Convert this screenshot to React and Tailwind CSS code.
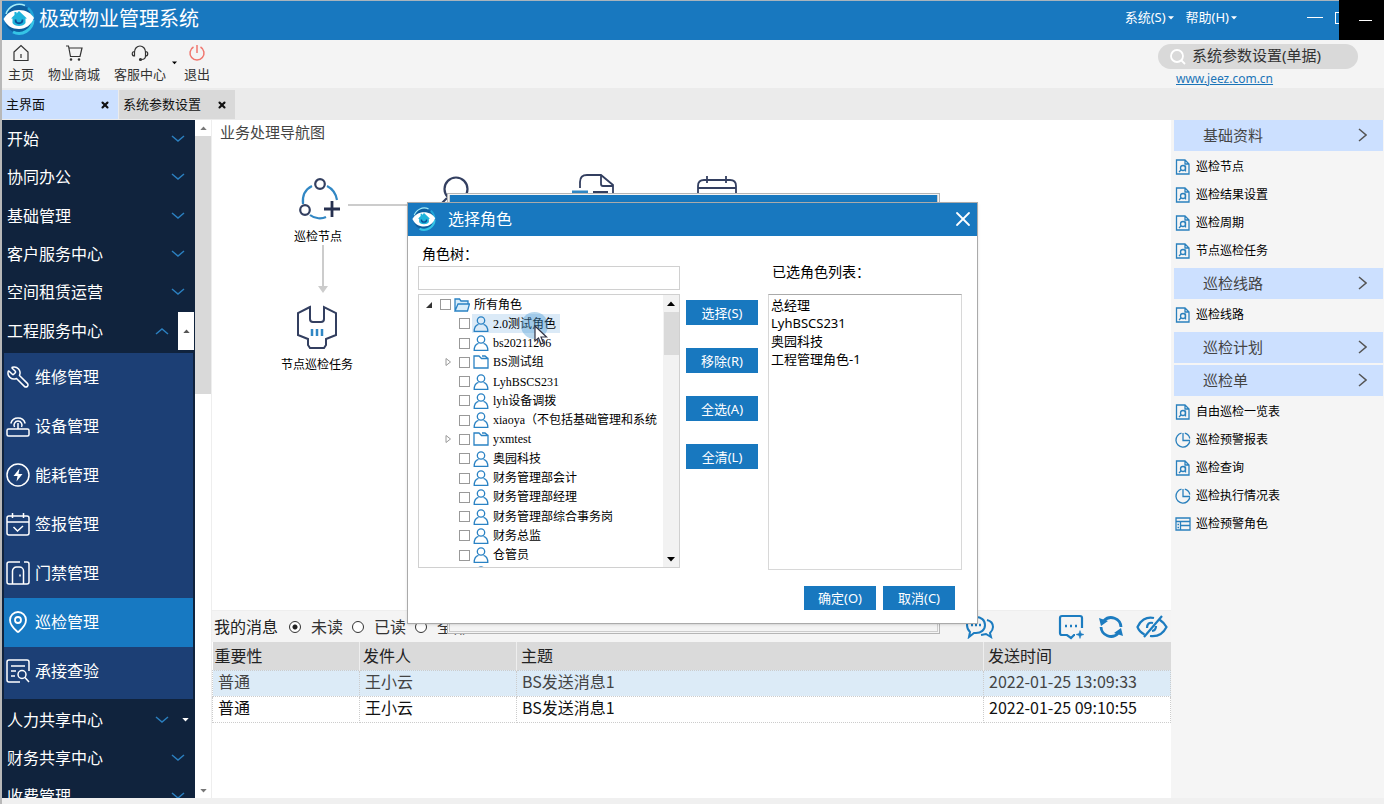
import { Wrench, MapPin, X } from 'lucide-react'
import clsx from 'clsx'

const topMenus = ['开始', '协同办公', '基础管理', '客户服务中心', '空间租赁运营', '工程服务中心']
const bottomMenus = ['人力共享中心', '财务共享中心', '收费管理']

const subMenus = [
  { name: '维修管理', icon: 'wrench' },
  { name: '设备管理', icon: 'router' },
  { name: '能耗管理', icon: 'energy' },
  { name: '签报管理', icon: 'calendar' },
  { name: '门禁管理', icon: 'door' },
  { name: '巡检管理', icon: 'pin', active: true },
  { name: '承接查验', icon: 'inspect' },
]

const sideGroups = [
  {
    title: '基础资料',
    items: [
      { name: '巡检节点', icon: 'doc' },
      { name: '巡检结果设置', icon: 'doc' },
      { name: '巡检周期', icon: 'doc' },
      { name: '节点巡检任务', icon: 'doc' },
    ],
  },
  { title: '巡检线路', items: [{ name: '巡检线路', icon: 'doc' }] },
  { title: '巡检计划', items: [] },
  {
    title: '巡检单',
    items: [
      { name: '自由巡检一览表', icon: 'doc' },
      { name: '巡检预警报表', icon: 'pie' },
      { name: '巡检查询', icon: 'doc' },
      { name: '巡检执行情况表', icon: 'pie' },
      { name: '巡检预警角色', icon: 'table' },
    ],
  },
]

const roles = [
  { name: '所有角色', type: 'root' },
  { name: '2.0测试角色', type: 'user', hover: true },
  { name: 'bs20211206', type: 'user' },
  { name: 'BS测试组', type: 'folder' },
  { name: 'LyhBSCS231', type: 'user' },
  { name: 'lyh设备调拨', type: 'user' },
  { name: 'xiaoya（不包括基础管理和系统', type: 'user' },
  { name: 'yxmtest', type: 'folder' },
  { name: '奥园科技', type: 'user' },
  { name: '财务管理部会计', type: 'user' },
  { name: '财务管理部经理', type: 'user' },
  { name: '财务管理部综合事务岗', type: 'user' },
  { name: '财务总监', type: 'user' },
  { name: '仓管员', type: 'user' },
]

const selectedRoles = ['总经理', 'LyhBSCS231', '奥园科技', '工程管理角色-1']

const messages = [
  { level: '普通', sender: '王小云', subject: 'BS发送消息1', time: '2022-01-25 13:09:33' },
  { level: '普通', sender: '王小云', subject: 'BS发送消息1', time: '2022-01-25 09:10:55' },
]

function Logo({ className }) {
  return (
    <svg className={className} viewBox="0 0 32 32" fill="none">
      <circle cx="16" cy="16" r="14" fill="#0d5f9f" />
      <path d="M3 11A14 14 0 0 1 22 2.500" stroke="#a5ecf8" strokeWidth="1.500" />
      <path d="M30 17A14 14 0 0 1 10 29" stroke="#35c4e6" strokeWidth="3" />
      <path d="M25 5a14 14 0 0 1 5 10" stroke="#1fa5d8" strokeWidth="2.500" />
      <path d="M0.500 16C4 10 9 7 16 7s12 3 15 8c-3 7-8 11-15 11S4 23 0.500 16Z" fill="#fff" />
      <path d="M16 8L24 15.500h-1.500V20c-2 4-11 4-13 0v-4.500H8l3.500-3.500V9h2v1.500Z" fill="#1fb4dc" />
      <path d="M12.500 16.500c0 5 7 5 7 0" stroke="#0b4f96" strokeWidth="1.800" />
    </svg>
  )
}

// 小三角箭头
function Caret({ up, className }) {
  return (
    <svg className={className} width="8" height="5" viewBox="0 0 8 5" fill="currentColor">
      <path d={up ? 'M0 5L4 0.500L8 5Z' : 'M0 0L4 4.500L8 0Z'} />
    </svg>
  )
}

function Chevron({ up }) {
  return (
    <svg width="14" height="8" viewBox="0 0 14 8" fill="none" stroke="#2b7fbf" strokeWidth="1.500">
      <path d={up ? 'M1 7L7 2L13 7' : 'M1 1L7 6L13 1'} />
    </svg>
  )
}

function SubIcon({ name }) {
  if (name === 'wrench') return <Wrench className="w-6 h-6 -scale-x-100" strokeWidth={1.5} />
  if (name === 'pin') return <MapPin className="w-6 h-6" strokeWidth={1.8} />
  return (
    <svg className="w-6 h-6" viewBox="0 0 24 24" fill="none" stroke="currentColor" strokeWidth="1.500">
      {name === 'router' && (
        <>
          <rect x="1" y="15" width="22" height="7" rx="1.500" />
          <path d="M12 15V9M8.500 13a4 4 0 1 1 7 0M4.800 9.500a7.500 7.500 0 0 1 14.400 0" />
        </>
      )}
      {name === 'energy' && (
        <>
          <circle cx="12" cy="12" r="11" />
          <path d="M13.500 5.500L7.500 13h4l-1 5.500 6-7.500h-4Z" fill="currentColor" stroke="none" />
        </>
      )}
      {name === 'calendar' && (
        <path d="M3 4h18a2 2 0 0 1 2 2v15a2 2 0 0 1-2 2H3a2 2 0 0 1-2-2V6a2 2 0 0 1 2-2ZM1 10h22M6.500 1v5M17.500 1v5M7.500 15l4 4 5.500-5" />
      )}
      {name === 'door' && (
        <>
          <path d="M14 1H3a2 2 0 0 0-2 2v18a2 2 0 0 0 2 2h18a2 2 0 0 0 2-2V3a2 2 0 0 0-2-2h-3" />
          <path d="M6.500 23V10a4 4 0 0 1 4-4h3a4 4 0 0 1 4 4v13M14 13.500v2" />
        </>
      )}
      {name === 'inspect' && (
        <>
          <path d="M23 12V3a2 2 0 0 0-2-2H3a2 2 0 0 0-2 2v18a2 2 0 0 0 2 2h11M5 7h14M5 12h5M5 17h4" />
          <circle cx="16" cy="15.500" r="4" />
          <path d="M19 18.500L23 23" />
        </>
      )}
    </svg>
  )
}

function ItemIcon({ name }) {
  return (
    <svg className="w-4 h-4 shrink-0" viewBox="0 0 16 16" fill="none" stroke="#2a80bd" strokeWidth="1.300">
      {name === 'doc' && (
        <>
          <path d="M10 1H1.500v14h12.500V5Zv4h4" />
          <circle cx="8" cy="9" r="2.500" />
          <path d="M10.500 6.500v6M6.200 10.800L4 13" />
        </>
      )}
      {name === 'pie' && <path d="M6.500 1.200a7 7 0 1 0 8.300 8.300M8 1v7.500h7M9.800 1.200a7 7 0 0 1 5 5.300" />}
      {name === 'table' && <path d="M1 2h14v12H1ZM1 5.500h14M5.500 5.500v8.500M5.500 9.500h9.500M2.500 8.500h1.500M2.500 11.500h1.500" />}
    </svg>
  )
}

function TreeIcon({ type }) {
  return (
    <svg className="w-4 h-4 shrink-0" viewBox="0 0 16 16" fill="none" stroke="#2a82c4" strokeWidth="1.300">
      {type === 'user' && (
        <>
          <circle cx="8" cy="4.500" r="3.700" />
          <path d="M5.500 8.300C3 9 1.200 11.500 1.200 15.300h13.600c0-3.800-1.800-6.300-4.300-7" />
        </>
      )}
      {type === 'folder' && <path d="M1 14V2h5l2.500 2.500H15V14ZM9 2h3l3 2.500" />}
      {type === 'root' && <path d="M1 14V2h4.500L7 4h7v3M1 14L4 7h11.500L13.500 14Z" fill="#d8edfa" />}
    </svg>
  )
}

function TitleBar() {
  return (
    <header className="flex h-10 shrink-0 border-t border-[#a9b4bc] bg-[#1878bf] text-white">
      <div className="flex flex-1 items-center pl-px pb-1">
        <Logo className="w-8 h-8" />
        <h1 className="ml-1 text-xl leading-8">极致物业管理系统</h1>
      </div>
      <nav className="flex items-center gap-3 pb-[5px] text-[13px]">
        <button className="flex items-center gap-[2px]">系统(S)<Caret className="w-[6px] h-[4px]" /></button>
        <button className="flex items-center gap-[2px]">帮助(H)<Caret className="w-[6px] h-[4px]" /></button>
      </nav>
      <div className="ml-[70px] flex items-center gap-3 pb-[6px]">
        <button aria-label="最小化" className="h-px w-4 bg-white"></button>
        <button aria-label="最大化" className="h-3 w-1 border border-r-0 border-white"></button>
      </div>
      <div className="-mt-px flex w-[45px] items-center justify-center bg-black pl-2">
        <span className="h-px w-[13px] bg-white"></span>
      </div>
    </header>
  )
}

function ToolButton({ label, children }) {
  return (
    <button className="flex flex-col items-center gap-[2px] text-[13px] leading-5 text-[#333]">
      <svg className="h-[18px] w-[18px]" viewBox="0 0 18 18" fill="none" stroke="currentColor" strokeWidth="1.200">
        {children}
      </svg>
      {label}
    </button>
  )
}

function Toolbar() {
  return (
    <div className="flex h-12 shrink-0 bg-[#f4f4f4]">
      <div className="flex flex-1 items-start pl-[6px] pt-1">
        <ToolButton label="主页">
          <path d="M2 8L9 1.500L16 8v8.500H2ZM9 10v4" />
        </ToolButton>
        <div className="ml-[14px] flex">
          <ToolButton label="物业商城">
            <path d="M1 2h2.500l2 10.500h9.500l2-8.500H4" />
            <circle cx="6" cy="15.500" r="0.700" />
            <circle cx="14" cy="15.500" r="0.700" />
          </ToolButton>
        </div>
        <div className="ml-[14px] flex">
          <ToolButton label="客服中心">
            <path d="M3.500 11V8a5.500 6 0 0 1 11 0v3M3.500 7.500c-3 0-3 4.500 0 4.500ZM14.500 7.500c3 0 3 4.500 0 4.500ZM14.500 12c0 2-1.500 3.500-4 3.500" />
            <circle cx="9.500" cy="15.500" r="1" fill="currentColor" />
          </ToolButton>
        </div>
        <Caret className="ml-[6px] mt-[17px] w-[5px] h-[4px]" />
        <div className="ml-[7px] flex">
          <ToolButton label="退出">
            <path d="M9 1v8M5.500 3a7 7 0 1 0 7 0" stroke="#f0766e" strokeWidth="1.500" />
          </ToolButton>
        </div>
      </div>
      <div className="mr-[26px] w-[200px] pt-1">
        <label className="flex h-[25px] items-center rounded-full bg-[#d9d9d9] pl-3">
          <svg className="w-4 h-4 shrink-0" viewBox="0 0 16 16" fill="none" stroke="#fff" strokeWidth="1.800">
            <circle cx="7" cy="7" r="6" />
            <path d="M11.500 11.500L15 15" />
          </svg>
          <input
            type="text"
            aria-label="搜索"
            defaultValue="系统参数设置(单据)"
            className="ml-[6px] w-[150px] bg-transparent pb-[2px] text-[15px] text-[#333] outline-none"
          />
        </label>
        <a href="#" className="ml-[18px] block w-fit text-xs leading-5 text-[#1b74b8] underline">www.jeez.com.cn</a>
      </div>
    </div>
  )
}

function Tabs() {
  return (
    <div className="flex h-8 shrink-0 gap-px bg-[#ebebeb] pt-[2px] pb-px text-[13px] text-[#111]">
      <div className="flex w-[116px] items-center justify-between bg-[#cce0ff] pl-1 pr-2">
        主界面
        <button aria-label="关闭主界面"><X className="w-[10px] h-[10px]" strokeWidth={5} /></button>
      </div>
      <div className="flex w-[116px] items-center justify-between bg-[#d9d9d9] pl-1 pr-2">
        系统参数设置
        <button aria-label="关闭系统参数设置"><X className="w-[10px] h-[10px]" strokeWidth={5} /></button>
      </div>
    </div>
  )
}

function Sidebar() {
  return (
    <aside className="flex w-[210px] shrink-0">
      <div className="w-[193px] overflow-hidden bg-[#10233d] text-base text-white">
        <div className="grid h-[230px] grid-rows-6">
          {topMenus.map((name) => (
            <button key={name} className="flex items-center justify-between pl-[5px] text-left">
              {name}
              {name === '工程服务中心' ? (
                <span className="flex items-center gap-[9px] pr-px">
                  <Chevron up />
                  <span className="flex h-[38px] w-4 items-center justify-center bg-white text-[#555]">
                    <Caret up className="w-[7px] h-[4px]" />
                  </span>
                </span>
              ) : (
                <span className="pr-[10px]"><Chevron /></span>
              )}
            </button>
          ))}
        </div>
        <div className="mx-[2px] mt-[3px] bg-[#1c3f75] pb-[3px]">
          {subMenus.map((item) => (
            <button
              key={item.name}
              className={clsx(
                'flex h-[49px] w-full items-center gap-[5px] pl-[2px] pb-[2px] text-left',
                item.active && 'bg-[#1779c2]'
              )}
            >
              <SubIcon name={item.icon} />
              {item.name}
            </button>
          ))}
        </div>
        <div className="pt-[2px]">
          {bottomMenus.map((name, i) => (
            <button key={name} className="flex h-[38px] w-full items-center justify-between pl-[5px] pr-[10px] text-left">
              {name}
              {i === 0 ? (
                <span className="-mr-[4px] flex items-center gap-[13px]">
                  <Chevron />
                  <Caret className="w-[7px] h-[4px]" />
                </span>
              ) : (
                <Chevron />
              )}
            </button>
          ))}
        </div>
      </div>
      {/* 滚动条 */}
      <div className="flex w-[17px] flex-col items-center border-r border-[#eee] bg-white text-[#777]">
        <div className="flex h-4 items-center"><Caret up className="w-[7px] h-[4px]" /></div>
        <div className="h-[258px] w-full bg-[#d9d9d9]"></div>
        <div className="mt-auto flex h-[15px] items-center"><Caret className="w-[7px] h-[4px]" /></div>
      </div>
    </aside>
  )
}

function FlowMap() {
  return (
    <section className="relative flex-1 bg-white">
      <h2 className="pl-2 text-[15px] leading-6 text-[#444]">业务处理导航图</h2>
      {/* 流程节点 */}
      <button className="absolute left-[82px] top-[57px] flex flex-col items-center gap-2 text-xs text-black">
        <svg className="w-11 h-11" viewBox="0 0 44 44" fill="none" strokeWidth="2.200">
          <path d="M7 27C6 18 10 12 16 9M31 9c6 3 9 8 10 14M14 38c5 4 12 4 16 2" stroke="#3187c4" />
          <circle cx="24" cy="7" r="4.800" stroke="#333f60" />
          <circle cx="9" cy="33" r="4.800" stroke="#333f60" />
          <path d="M36 24v16M28 32h16" stroke="#26304f" strokeWidth="2.800" />
        </svg>
        巡检节点
      </button>
      <button className="absolute left-[69px] top-[185px] flex flex-col items-center gap-2 text-xs text-black">
        <svg className="w-11 h-11" viewBox="0 0 44 44" fill="none" strokeWidth="2">
          <path d="M15 2L3 8v22l10 4v6l2 3h14l2-3v-6l10-4V8L29 2v12q0 3-3 3h-8q-3 0-3-3Z" stroke="#333f60" />
          <path d="M17 24v7M22 24v7M27 24v7" stroke="#3187c4" strokeWidth="2.500" />
        </svg>
        节点巡检任务
      </button>
      <div className="absolute left-[136px] top-[84px] h-[2px] w-[90px] bg-[#ccc]"></div>
      <svg className="absolute left-[106px] top-[125px]" width="10" height="50" viewBox="0 0 10 50" fill="#ccc">
        <path d="M4 0h2v41h4L5 48L0 41h4Z" />
      </svg>
      <svg className="absolute left-[222px] top-[54px]" width="44" height="44" viewBox="0 0 44 44" fill="none" stroke="#333f60" strokeWidth="2.200">
        <circle cx="22" cy="15" r="11.500" />
        <path d="M13 24L6 31" />
      </svg>
      <svg className="absolute left-[358px] top-[54px]" width="44" height="40" viewBox="0 0 44 40" fill="none" stroke="#333f60" strokeWidth="1.800">
        <path d="M10 14V8q0-7 7-7h14l12 10v28M31 1v9q0 2 2 2h10M23 18h15" />
        <path d="M2 18h16" stroke="#3187c4" strokeWidth="3" />
      </svg>
      <svg className="absolute left-[482px] top-[54px]" width="44" height="40" viewBox="0 0 44 40" fill="none" stroke="#333f60" strokeWidth="1.800">
        <path d="M4 40V12q0-6 6-6h26q6 0 6 6v28M4 14h38M13 2v7M32 2v7" />
      </svg>
    </section>
  )
}

function Messages() {
  return (
    <section className="h-[188px] shrink-0 bg-white text-base text-[#222]">
      <div className="flex h-8 items-center border-t border-[#eee] bg-[#f4f4f4] pl-[2px]">
        <span className="mr-[11px]">我的消息</span>
        {['未读', '已读', '全部'].map((label, i) => (
          <label key={label} className="mr-[9px] flex items-center gap-[10px] text-[#333]">
            <input
              type="radio"
              name="read"
              defaultChecked={i === 0}
              className="h-3 w-3 appearance-none rounded-full border border-[#333] bg-white checked:border-[#333] checked:bg-[radial-gradient(#222_0_2px,white_3px)]"
            />
            {label}
          </label>
        ))}
        <div className="ml-auto flex items-center pr-[3px] text-[#1c7cc0]">
          <button aria-label="聊天" className="mr-[63px]">
            <svg width="30" height="24" viewBox="0 0 30 24" fill="none" stroke="currentColor" strokeWidth="2">
              <path d="M11 2c5 0 9 3 9 8s-4 8-9 8H9l-5 4 1-5c-2-2-3-4-3-7 0-5 4-8 9-8ZM22 5c4 1 6 4 6 7s-1 4-3 6l1 4-5-3-5 1" />
              <path d="M6 10h2M10 10h2M14 10h2" strokeWidth="2.500" />
            </svg>
          </button>
          <button aria-label="新消息" className="mr-[14px]">
            <svg width="26" height="26" viewBox="0 0 26 26" fill="none" stroke="currentColor" strokeWidth="2.200">
              <path d="M24 14V4q0-2-2-2H4Q2 2 2 4v15q0 2 2 2h5l4 3 3-3h1" />
              <path d="M22 16.500l1 3 3 1-3 1-1 3-1-3-3-1 3-1Z" fill="currentColor" strokeWidth="0.500" />
              <path d="M7 12h2M12 12h2M17 12h2" strokeWidth="2.500" />
            </svg>
          </button>
          <button aria-label="刷新" className="mr-3">
            <svg width="26" height="26" viewBox="0 0 26 26" fill="none" stroke="currentColor" strokeWidth="2.800">
              <path d="M6 6.500a10 10 0 0 1 17 6.500M20 19.500A10 10 0 0 1 3 13" />
              <path d="M1 4l2 8 7-5ZM25 22l-2-8-7 5Z" fill="currentColor" stroke="none" />
            </svg>
          </button>
          <button aria-label="隐藏">
            <svg width="32" height="24" viewBox="0 0 32 24" fill="none" stroke="currentColor" strokeWidth="2.200">
              <path d="M18 3C10 1 4 6 1.500 12c1.500 4 4 6 7 7.500M24 5c3 2 5 4 6.500 7C27 19 21 22 14 21M17 8c-4-1-6 1-6 5M20 11c0 3-1 4.500-4 5M26 1L8 22" />
            </svg>
          </button>
        </div>
      </div>
      <table className="w-full table-fixed border-collapse text-left font-['Noto_Sans_CJK_SC',sans-serif]">
        <thead>
          <tr className="h-7 bg-[#dadada] leading-6">
            <th className="w-[147px] border-r border-[#eee] p-0 pb-[2px] pl-[2px] font-normal">重要性</th>
            <th className="w-[157px] border-r border-[#eee] p-0 pb-[2px] pl-[3px] font-normal">发件人</th>
            <th className="border-r border-[#eee] p-0 pb-[2px] pl-1 font-normal">主题</th>
            <th className="w-[187px] p-0 pb-[2px] pl-1 font-normal">发送时间</th>
          </tr>
        </thead>
        <tbody>
          {messages.map((m, i) => (
            <tr key={m.time} className={clsx('h-[26px] leading-5', i === 0 ? 'bg-[#dcebf7] text-[#444]' : 'text-[#111]')}>
              <td className="border border-dotted border-[#ccc] p-0 pb-1 pl-[5px]">{m.level}</td>
              <td className="border border-dotted border-[#ccc] p-0 pb-1 pl-[5px]">{m.sender}</td>
              <td className="border border-dotted border-[#ccc] p-0 pb-1 pl-[5px]">{m.subject}</td>
              <td className="border border-dotted border-[#ccc] p-0 pb-1 pl-[5px]">{m.time}</td>
            </tr>
          ))}
        </tbody>
      </table>
    </section>
  )
}

function RightPanel() {
  return (
    <aside className="w-[213px] shrink-0 bg-[#f5f5f5] pl-[3px] pr-px">
      {sideGroups.map((group) => (
        <div key={group.title}>
          <button className="flex h-[31px] w-full items-center justify-between bg-[#cce0ff] pb-[2px] pl-[29px] pr-4 text-[15px] leading-6 text-[#444]">
            {group.title}
            <svg width="9" height="14" viewBox="0 0 9 14" fill="none" stroke="#555" strokeWidth="1.500">
              <path d="M1 1L8 7L1 13" />
            </svg>
          </button>
          {group.items.length > 0 ? (
            <div className="pt-[2px] pb-[3px]">
              {group.items.map((item) => (
                <a key={item.name} href="#" className="flex h-7 items-center gap-[5px] pl-px text-xs text-black">
                  <ItemIcon name={item.icon} />
                  {item.name}
                </a>
              ))}
            </div>
          ) : (
            <div className="h-[2px]"></div>
          )}
        </div>
      ))}
    </aside>
  )
}

function RoleTree() {
  return (
    <div className="flex h-[274px] border border-[#d0d0d0]">
      <div className="flex-1 overflow-hidden">
        <div className="grid h-[289px] grid-rows-15 text-xs text-black font-['Liberation_Serif','Noto_Sans_CJK_SC',serif]">
          {roles.map((role) => (
            <div key={role.name} className={clsx('flex items-center', role.type === 'root' ? 'pl-[6px]' : 'pl-[25px]')}>
              <svg className="mr-[7px] h-2 w-2" viewBox="0 0 8 8" fill="none">
                {role.type === 'root' && <path d="M7 1v6H1Z" fill="#333" />}
                {role.type === 'folder' && <path d="M2 0.500L6.500 4L2 7.500Z" stroke="#999" />}
              </svg>
              <label className="flex items-center">
                <input type="checkbox" className="mr-[2px] h-[11px] w-[11px] appearance-none border border-[#999] bg-white" />
                <span className={clsx('flex h-[19px] items-center gap-1 pl-px pr-1 whitespace-nowrap', role.hover && 'bg-[#dbeaf7]')}>
                  <TreeIcon type={role.type} />
                  {role.name}
                </span>
              </label>
            </div>
          ))}
          <div className="flex items-center pl-[54px]"><TreeIcon type="user" /></div>
        </div>
      </div>
      <div className="flex w-4 flex-col items-center bg-[#f2f2f2] text-black">
        <div className="flex h-[17px] items-center"><Caret up className="w-[8px] h-[5px]" /></div>
        <div className="h-[43px] w-[15px] bg-[#dadada]"></div>
        <div className="mt-auto flex h-[15px] items-center"><Caret className="w-[8px] h-[5px]" /></div>
      </div>
    </div>
  )
}

function RoleDialog() {
  return (
    <div role="dialog" className="absolute left-[407px] top-[202px] w-[571px] border border-[#aaa] bg-white shadow-sm">
      <div className="flex h-[33px] items-center bg-[#1878bf] pb-[2px] pl-1 pr-[2px] text-white">
        <Logo className="w-6 h-6" />
        <h2 className="ml-3 flex-1 text-base">选择角色</h2>
        <button aria-label="关闭"><X className="w-6 h-6" strokeWidth={1.8} /></button>
      </div>
      <div className="flex pl-[10px]">
        <div className="w-[262px] pt-2">
          <label htmlFor="role-search" className="mb-[2px] block h-5 pl-1 text-sm leading-5 text-black">角色树：</label>
          <input id="role-search" type="text" className="mb-1 block h-6 w-full border border-[#d0d0d0] px-1 text-xs outline-none" />
          <RoleTree />
        </div>
        <div className="ml-[6px] flex w-[72px] flex-col gap-6 pt-16">
          {['选择(S)', '移除(R)', '全选(A)', '全清(L)'].map((label) => (
            <button key={label} className="h-[25px] -mb-px bg-[#1878bf] text-[13px] leading-6 text-white">{label}</button>
          ))}
        </div>
        <div className="ml-[10px] w-[194px] pt-[26px]">
          <h3 className="mb-3 h-5 pl-1 text-sm leading-5 text-black">已选角色列表：</h3>
          <ul className="h-[276px] border border-[#d8d8d8] border-t-[#aaa] pl-[2px] text-[13px] text-black">
            {selectedRoles.map((name) => (
              <li key={name} className="h-[18px] leading-5">{name}</li>
            ))}
          </ul>
        </div>
      </div>
      <div className="mt-4 flex justify-end gap-[7px] pb-[13px] pr-[22px]">
        <button className="h-6 w-[72px] bg-[#1878bf] text-[13px] leading-6 text-white">确定(O)</button>
        <button className="h-6 w-[72px] bg-[#1878bf] text-[13px] leading-6 text-white">取消(C)</button>
      </div>
    </div>
  )
}

function App() {
  return (
    <div className="relative flex h-screen flex-col overflow-hidden border-l-2 border-[#b8b8b8] bg-[#f0f0f0] font-['Noto_Sans','Noto_Sans_CJK_SC',sans-serif]">
      <TitleBar />
      <Toolbar />
      <Tabs />
      <div className="mb-[6px] flex min-h-0 flex-1">
        <Sidebar />
        <main className="flex min-w-0 flex-1 flex-col">
          <FlowMap />
          <Messages />
        </main>
        <RightPanel />
      </div>

      {/* 弹窗与页面左边框共用坐标原点 */}
      <div className="absolute -left-[2px] top-0">
        <div className="absolute left-[447px] top-[193px] h-[441px] w-[493px] border border-[#b5b5b5] bg-[#f4f4f4] p-px">
          <div className="h-full border border-t-0 border-[#ccc]">
            <div className="h-8 bg-[#1878bf]"></div>
          </div>
        </div>
        <RoleDialog />
        {/* 鼠标指针 */}
        <div className="absolute left-[521px] top-[312px] h-[27px] w-[27px] rounded-full bg-[#4a9bd4]/40"></div>
        <svg className="absolute left-[534px] top-[325px]" width="14" height="20" viewBox="0 0 14 20" fill="#fff" stroke="#334" strokeWidth="1.200">
          <path d="M1 1v15l3.500-3 2.500 6 2.500-1L7 12h5.500Z" />
        </svg>
      </div>
    </div>
  )
}

export default App
